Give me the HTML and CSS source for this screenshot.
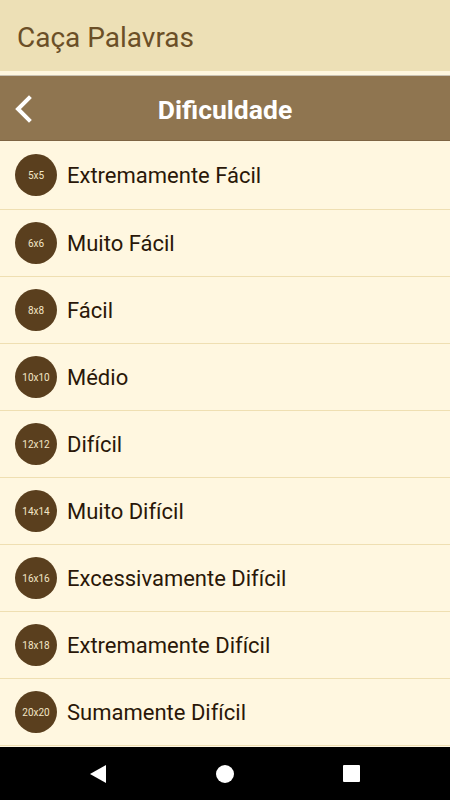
FILE: index.html
```html
<!DOCTYPE html>
<html lang="pt">

<head>
    <meta charset="UTF-8">
    <meta name="viewport" content="width=device-width, initial-scale=1.0">
    <title>Caça Palavras</title>
    <link rel="stylesheet" href="styles.css">
</head>

<body>
    <div class="app">
        <!-- barra do app -->
        <header class="appbar">Caça Palavras</header>
        <!-- cabeçalho da tela -->
        <div class="toolbar">
            <svg class="back" width="18" height="28" viewBox="0 0 18 28">
                <path d="M15 3 L4 14 L15 25" fill="none" stroke="#fff" stroke-width="4" stroke-linecap="square" />
            </svg>
            <h1 class="title">Dificuldade</h1>
        </div>
        <!-- lista de níveis -->
        <ul class="levels">
            <li class="level"><span class="badge">5x5</span>Extremamente Fácil</li>
            <li class="level"><span class="badge">6x6</span>Muito Fácil</li>
            <li class="level"><span class="badge">8x8</span>Fácil</li>
            <li class="level"><span class="badge">10x10</span>Médio</li>
            <li class="level"><span class="badge">12x12</span>Difícil</li>
            <li class="level"><span class="badge">14x14</span>Muito Difícil</li>
            <li class="level"><span class="badge">16x16</span>Excessivamente Difícil</li>
            <li class="level"><span class="badge">18x18</span>Extremamente Difícil</li>
            <li class="level"><span class="badge">20x20</span>Sumamente Difícil</li>
        </ul>
        <!-- barra de navegação do android -->
        <nav class="navbar">
            <svg width="16" height="18" viewBox="0 0 16 18"><path d="M16 0 L16 18 L0 9 Z" fill="#fff" /></svg>
            <span class="home"></span>
            <span class="recent"></span>
        </nav>
    </div>
</body>

</html>
```

FILE: styles.css
```css
* {
    margin: 0;
    padding: 0;
    box-sizing: border-box;
}

body {
    font-family: Roboto, "Liberation Sans", sans-serif;
    background-color: #fff7e0;
}

.app {
    display: flex;
    flex-direction: column;
    height: 800px;
}
/* barra de cima */

.appbar {
    height: 71px;
    padding: 4px 0 0 17px;
    display: flex;
    align-items: center;
    font-size: 28px;
    color: #6b4f27;
    background-color: #ede0b6;
}
/* faixa branca + linha cinza antes do cabeçalho */

.toolbar {
    position: relative;
    height: 66px;
    margin-top: 4px;
    padding-top: 3px;
    border-top: 1px solid #c9c2b4;
    border-bottom: 1px solid #7d6443;
    background-color: #8f7550;
    display: flex;
    align-items: center;
    justify-content: center;
}

.back {
    position: absolute;
    left: 14px;
    top: 19px;
}

.title {
    font-size: 26.5px;
    font-weight: bold;
    color: #fff;
}

.levels {
    list-style: none;
    flex: 1;
}

.level {
    height: 67px;
    display: flex;
    align-items: center;
    gap: 10px;
    padding-left: 15px;
    font-size: 22px;
    color: #2a1708;
    border-bottom: 1px solid #efdfb2;
}

.level:first-child {
    height: 69px;
}

.badge {
    width: 42px;
    height: 42px;
    border-radius: 50%;
    background-color: #5a3f1e;
    color: #f3e6c6;
    font-size: 10px;
    display: flex;
    align-items: center;
    justify-content: center;
}

.navbar {
    height: 53px;
    background-color: #000;
    display: flex;
    align-items: center;
    justify-content: space-between;
    padding: 0 90px;
}

.home {
    width: 18px;
    height: 18px;
    border-radius: 50%;
    background-color: #fff;
}

.recent {
    width: 17px;
    height: 17px;
    background-color: #fff;
    border-radius: 1px;
}
```
